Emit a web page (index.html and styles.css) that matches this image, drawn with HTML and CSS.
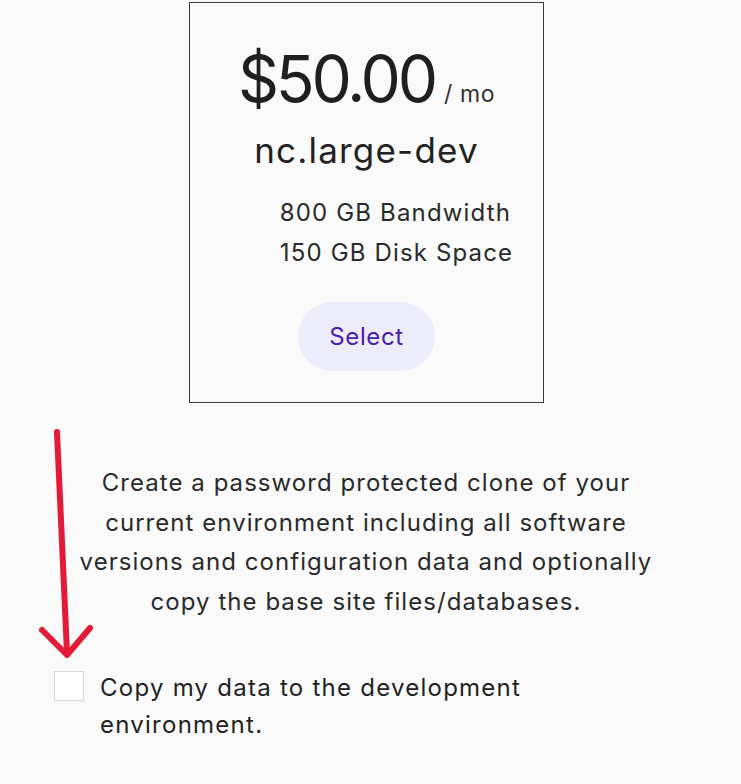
FILE: index.html
```html
<!DOCTYPE html>
<html>
<head>
<meta charset="utf-8">
<link rel="stylesheet" href="styles.css">
</head>
<body>
<div class="page">
  <div class="card">
    <div class="price"><span class="amount">$50.00</span><span class="per">/ mo</span></div>
    <div class="plan">nc.large-dev</div>
    <ul class="features">
      <li>800 GB Bandwidth</li>
      <li>150 GB Disk Space</li>
    </ul>
    <button class="select">Select</button>
  </div>
  <div class="lower">
    <svg class="arrow" width="70" height="240" viewBox="0 0 70 240">
      <path d="M21 12 L31 233" stroke="#e31b37" stroke-width="6" stroke-linecap="round" fill="none"/>
      <path d="M6 210 L31 235 L54 208" stroke="#e31b37" stroke-width="6" stroke-linecap="round" stroke-linejoin="round" fill="none"/>
    </svg>
    <p class="desc">Create a password protected clone of your current environment including all software versions and configuration data and optionally copy the base site files/databases.</p>
    <label class="check"><span class="box"></span><span class="label">Copy my data to the development environment.</span></label>
  </div>
</div>
</body>
</html>
```
FILE: styles.css
```css
html, body {
  margin: 0;
  padding: 0;
  background: #fafafa;
}
body {
  font-family: Inter, "Noto Sans", sans-serif;
  color: #222;
}
.page {
  width: 741px;
  height: 784px;
  overflow: hidden;
}
.card {
  box-sizing: border-box;
  width: 355px;
  height: 401px;
  margin: 2px 0 0 189px;
  border: 1px solid #3a3a3a;
  display: flex;
  flex-direction: column;
  align-items: center;
}
.price {
  margin-top: 36px;
  display: flex;
  align-items: baseline;
  padding-left: 0;
}
.amount {
  font-size: 64px;
  line-height: 80px;
  letter-spacing: -3.2px;
  color: #1f1f1f;
}
.per {
  font-size: 23px;
  margin-left: 9px;
  letter-spacing: 0.6px;
  color: #333;
}
.plan {
  font-size: 35px;
  line-height: 44px;
  margin-top: 9px;
  letter-spacing: 1.2px;
  color: #222;
}
.features {
  list-style: none;
  margin: 21px 0 0 0;
  padding: 0 0 0 60px;
  font-size: 24px;
  line-height: 40px;
  letter-spacing: 1.15px;
  color: #2a2a2a;
}
.select {
  margin-top: 29px;
  width: 137px;
  height: 69px;
  border: none;
  border-radius: 35px;
  background: #ececfb;
  color: #4a1db3;
  font-family: Inter, "Noto Sans", sans-serif;
  font-size: 24px;
  letter-spacing: 0.6px;
}
.lower {
  position: relative;
  display: flow-root;
  height: 380px;
}
.arrow {
  position: absolute;
  left: 36px;
  top: 17px;
}
.desc {
  margin: 60px 0 0 61px;
  width: 610px;
  text-align: center;
  font-size: 24px;
  line-height: 39.5px;
  letter-spacing: 1.05px;
  color: #2a2a2a;
}
.check {
  display: flex;
  align-items: flex-start;
  margin: 48px 0 0 54px;
  width: 500px;
}
.box {
  flex: none;
  box-sizing: border-box;
  width: 30px;
  height: 30px;
  background: #fff;
  border: 1px solid #d8d8d8;
  margin-top: 2px;
}
.label {
  margin-left: 16px;
  font-size: 24px;
  line-height: 37px;
  letter-spacing: 1.25px;
  color: #222;
}
```
